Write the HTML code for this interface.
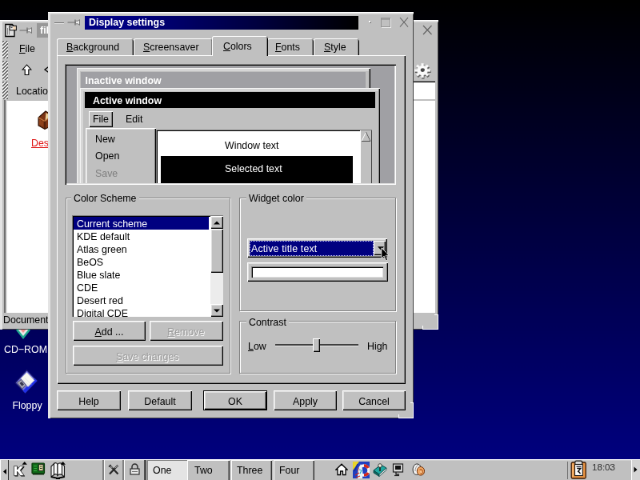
<!DOCTYPE html>
<html>
<head>
<meta charset="utf-8">
<title>Display settings</title>
<style>
html,body{margin:0;padding:0;width:640px;height:480px;overflow:hidden;background:#000040;}
body{font-family:"Liberation Sans",sans-serif;font-size:12.4px;color:#000;}
#s{position:absolute;left:0;top:0;width:800px;height:600px;will-change:transform;transform:scale(0.8);transform-origin:0 0;overflow:hidden;
 background:linear-gradient(to bottom,#000000 0px,#000084 600px);}
#s div,#s span,#s svg{position:absolute;box-sizing:border-box;}
.t{white-space:nowrap;line-height:14px;height:14px;}
u{text-decoration:underline;}
.g{background:#c0c0c0;}
/* raised button (Qt1 windows style) */
.btn{background:#c0c0c0;box-shadow:inset 1px 1px 0 #ffffff,inset -1px -1px 0 #000000,inset -2px -2px 0 #808080,inset 2px 2px 0 #dfdfdf;text-align:center;}
.btn .t{left:0;right:0;text-align:center;}
.sunk{box-shadow:inset 1px 1px 0 #808080,inset -1px -1px 0 #ffffff,inset 2px 2px 0 #000000,inset -2px -2px 0 #dfdfdf;}
.grp{border:1px solid #808080;box-shadow:inset 1px 1px 0 #ffffff,1px 1px 0 #ffffff;}
.win{background:#c0c0c0;box-shadow:inset 1px 1px 0 #ffffff,inset -1px -1px 0 #000000,inset -2px -2px 0 #808080;}
.kw{background:#c0c0c0;box-shadow:inset 0 1px 0 #ffffff,inset 0 2.500px 0 #e6e6e6,inset 3px 0 0 #e4e4e4,inset -1px -1px 0 #404040;}
.rc{background:#fff;}
.pw{background:#c0c0c0;box-shadow:inset 1px 1px 0 #f4f4f4,inset -1px -1px 0 #000000,inset -2px -2px 0 #808080,inset 4px 4px 0 #d6d6d6;}
.dis{color:#ffffff;}
.dis i{font-style:normal;position:absolute;left:-1px;top:-1px;right:1px;color:#9c9c9c;text-align:inherit;}
.tab{background:#c0c0c0;box-shadow:inset 1px 0 0 #fff,inset 0 1px 0 #fff,inset -1px 0 0 #000,inset -2px 0 0 #808080;border-radius:3px 3px 0 0;}
.pb{background:#c0c0c0;box-shadow:inset 1px 1px 0 #fff,inset -1px 0 0 #303030,inset -2px 0 0 #808080;}
</style>
</head>
<body>
<div id="s">

<!-- ================= KFM window (behind) ================= -->
<div id="kfm" class="kw" style="left:0;top:25px;width:548px;height:387px;">
 <!-- title bar -->
 <svg style="left:5px;top:4px" width="18" height="18" viewBox="0 0 18 18">
  <path d="M1.800 1.500h8.500l2.700 2.700v12.300h-11.200z" fill="#e0e0e0" stroke="#000" stroke-width="1.300"/>
  <path d="M4.500 6v8.500M6.500 9.500v5" stroke="#808080" stroke-width="1"/>
  <path d="M7 3.200h8.300v5.600h-8.300z" fill="#f0f0f0" stroke="#000" stroke-width="1.100"/>
  <path d="M11.500 4h3v4h-3z" fill="#f4d4b0"/>
  <path d="M8.500 5.500h2" stroke="#404040" stroke-width="1.200"/>
 </svg>
 <svg style="left:23.600px;top:7.500px" width="17" height="10" viewBox="0 0 17 10">
  <path d="M0.500 5h9.500" stroke="#787878" stroke-width="1.200"/>
  <path d="M10 1.500v7" stroke="#686868" stroke-width="1.200"/>
  <path d="M10.500 3.200h3l2-1.700v7l-2-1.700h-3z" fill="#ececec" stroke="#787878" stroke-width="1"/>
 </svg>
 <div style="left:46px;top:4px;width:460px;height:18px;background:#989898;"></div>
 <div class="t" style="left:50px;top:6px;color:#fff;font-weight:bold;">file:/root/</div>
 <svg style="left:528px;top:6.300px" width="13" height="13" viewBox="0 0 13 13"><path d="M1 1l10.5 11M11.5 1l-10.5 11" stroke="#606060" stroke-width="1.1" fill="none"/></svg>
 <!-- handles -->
 <svg style="left:3px;top:25.5px" width="7" height="22.5" viewBox="0 0 7 22.5"><path d="M0 0.00L7 -7.00M0 4.25L7 -2.75M0 8.50L7 1.50M0 12.75L7 5.75M0 17.00L7 10.00M0 21.25L7 14.25M0 25.50L7 18.50M0 29.75L7 22.75M0 34.00L7 27.00" stroke="#ffffff" stroke-width="1.9" fill="none"/><path d="M0 1.75L7 -5.25M0 6.00L7 -1.00M0 10.25L7 3.25M0 14.50L7 7.50M0 18.75L7 11.75M0 23.00L7 16.00M0 27.25L7 20.25M0 31.50L7 24.50M0 35.75L7 28.75" stroke="#585858" stroke-width="1.5" fill="none"/></svg>
 <svg style="left:3px;top:50.5px" width="7" height="24.5" viewBox="0 0 7 24.5"><path d="M0 0.00L7 -7.00M0 4.25L7 -2.75M0 8.50L7 1.50M0 12.75L7 5.75M0 17.00L7 10.00M0 21.25L7 14.25M0 25.50L7 18.50M0 29.75L7 22.75M0 34.00L7 27.00M0 38.25L7 31.25" stroke="#ffffff" stroke-width="1.9" fill="none"/><path d="M0 1.75L7 -5.25M0 6.00L7 -1.00M0 10.25L7 3.25M0 14.50L7 7.50M0 18.75L7 11.75M0 23.00L7 16.00M0 27.25L7 20.25M0 31.50L7 24.50M0 35.75L7 28.75M0 40.00L7 33.00" stroke="#585858" stroke-width="1.5" fill="none"/></svg>
 <svg style="left:3px;top:77px" width="7" height="22" viewBox="0 0 7 22"><path d="M0 0.00L7 -7.00M0 4.25L7 -2.75M0 8.50L7 1.50M0 12.75L7 5.75M0 17.00L7 10.00M0 21.25L7 14.25M0 25.50L7 18.50M0 29.75L7 22.75M0 34.00L7 27.00" stroke="#ffffff" stroke-width="1.9" fill="none"/><path d="M0 1.75L7 -5.25M0 6.00L7 -1.00M0 10.25L7 3.25M0 14.50L7 7.50M0 18.75L7 11.75M0 23.00L7 16.00M0 27.25L7 20.25M0 31.50L7 24.50M0 35.75L7 28.75" stroke="#585858" stroke-width="1.5" fill="none"/></svg>
 <!-- menubar -->
 <div class="t" style="left:24px;top:29px;"><u>F</u>ile</div>
 <!-- toolbar -->
 <svg style="left:26.500px;top:55px" width="13" height="15" viewBox="0 0 13 15"><path d="M6.500 1L1.200 7H4.200V13.500H8.800V7H11.800Z" fill="#fff" stroke="#000" stroke-width="1.100"/></svg>
 <svg style="left:54px;top:54px" width="14" height="16" viewBox="0 0 14 16"><path d="M10 2L2 8l8 6" fill="none" stroke="#000" stroke-width="1.3"/></svg>
 <!-- gear -->
 <svg style="left:517px;top:53px" width="24" height="24" viewBox="0 0 24 24">
  <path d="M21.7 10.1 L21.7 13.1 L18.4 13.0 L17.6 14.8 L20.0 16.8 L17.6 19.0 L15.4 16.8 L13.4 17.6 L13.5 20.5 L10.1 20.5 L10.2 17.6 L8.2 16.8 L6.0 19.0 L3.6 16.8 L6.0 14.8 L5.2 13.0 L1.9 13.1 L1.9 10.1 L5.2 10.2 L6.0 8.4 L3.6 6.4 L6.0 4.2 L8.2 6.4 L10.2 5.6 L10.1 2.7 L13.5 2.7 L13.4 5.6 L15.4 6.4 L17.6 4.2 L20.0 6.4 L17.6 8.4 L18.4 10.2Z" fill="#585858"/>
  <path d="M20.9 8.5 L20.9 11.5 L17.6 11.4 L16.8 13.2 L19.2 15.2 L16.8 17.4 L14.6 15.2 L12.6 16.0 L12.7 18.9 L9.3 18.9 L9.4 16.0 L7.4 15.2 L5.2 17.4 L2.8 15.2 L5.2 13.2 L4.4 11.4 L1.1 11.5 L1.1 8.5 L4.4 8.6 L5.2 6.8 L2.8 4.8 L5.2 2.6 L7.4 4.8 L9.4 4.0 L9.3 1.1 L12.7 1.1 L12.6 4.0 L14.6 4.8 L16.8 2.6 L19.2 4.8 L16.8 6.8 L17.6 8.6Z" fill="#fafafa" stroke="#d0d0d0" stroke-width="0.5"/>
  <ellipse cx="11.3" cy="9.6" rx="2.6" ry="2.3" fill="#484848"/>
 </svg>
 <!-- location bar -->
 <div class="t" style="left:20px;top:82px;">Location:</div>
 <div style="left:80px;top:76px;width:464px;height:23px;background:#fff;box-shadow:inset 1px 1px 0 #808080,inset 2px 2px 0 #000;"></div>
 <!-- view -->
 <div style="left:4.500px;top:100px;width:539.500px;height:266px;background:#fff;box-shadow:inset 2px 0 0 #707070,inset 3.500px 0 0 #c8c8c8,inset 0 1px 0 #c0c0c0;"></div>
 <svg style="left:46px;top:112px" width="20" height="26" viewBox="0 0 20 26">
  <path d="M2 10L11 2l8 5v13l-9 4.500-8-4.500z" fill="#7c3414" stroke="#2c1004" stroke-width="1.100"/>
  <path d="M2 10l8 4.500 9-7.500" fill="none" stroke="#c07840" stroke-width="1.300"/>
  <path d="M10 14.500v10" stroke="#2c1004" stroke-width="1"/>
  <path d="M11.500 4l6 3.500-7 6z" fill="#ecd098"/>
  <path d="M4 13v6M6.500 14.500v6" stroke="#a85828" stroke-width="1"/>
 </svg>
 <div class="t" style="left:39px;top:147px;color:#e01818;"><u>Desktop</u></div>

 <div class="rc" style="left:547px;top:368px;width:1.2px;height:19px;"></div>
 <div class="rc" style="left:528px;top:386px;width:20px;height:1.2px;"></div>
 <div class="rc" style="left:543px;top:368px;width:5px;height:1.2px;"></div>
 <div class="rc" style="left:528px;top:382px;width:1.2px;height:5px;"></div>
 <!-- status -->
 <div class="t" style="left:4px;top:368.200px;">Document: Done</div>
</div>

<!-- ================= desktop icons ================= -->
<div id="icons">
 <!-- CD-ROM (icon mostly hidden behind kfm) -->
 <svg style="left:18px;top:408px" width="22" height="20" viewBox="0 0 22 20">
  <path d="M3 4l8 10 8-10" fill="#e8e8e8" stroke="#20a890" stroke-width="2.5"/>
  <path d="M7.500 4h7l-3.500 4z" fill="#f09090"/>
 </svg>
 <div class="t" style="left:-1px;top:430px;width:66px;text-align:center;color:#fff;">CD&#8722;ROM</div>
 <!-- Floppy -->
 <svg style="left:18px;top:461px" width="30" height="32" viewBox="0 0 30 32">
  <path d="M15.500 1.500L28.500 15L13.500 30.500L1 17.500Z" fill="#7474dc" stroke="#141468" stroke-width="1.200"/>
  <path d="M28.500 15L13.500 30.500L10.500 27.500L25.500 12Z" fill="#2030e8"/>
  <path d="M15.500 4.500L25 14.500L17 22.500L8 12Z" fill="#f8f8f0" stroke="#b0b0d0" stroke-width="0.600"/>
  <path d="M11 13.500l8 8M13 11.500l8 8" stroke="#d8d8e8" stroke-width="0.700"/>
  <path d="M3.500 17.500L8.500 13.500L14.500 20.500L9.500 25Z" fill="#a8a8b8" stroke="#404058" stroke-width="0.800"/>
  <path d="M6.500 18L9 16l3 3.500-2.500 2.200Z" fill="#383850"/>
 </svg>
 <div class="t" style="left:1px;top:500px;width:66px;text-align:center;color:#fff;">Floppy</div>
</div>

<!-- ================= Display settings dialog ================= -->
<div id="dlg" class="kw" style="left:60px;top:15px;width:457px;height:508px;"></div>
<div id="dl">
 <!-- title bar -->
 <div style="left:106px;top:19.500px;width:342px;height:17.500px;background:linear-gradient(to right,#000084 0%,#000080 18%,#00003c 65%,#000000 100%);"></div>
 <div class="t" style="left:111px;top:21px;color:#fff;font-weight:bold;">Display settings</div>
 <div style="left:67.500px;top:27.500px;width:12px;height:1px;background:#707070;box-shadow:0 1px 0 #e8e8e8;"></div>
 <svg style="left:83.600px;top:22.500px" width="17" height="10" viewBox="0 0 17 10">
  <path d="M0.500 5h9.500" stroke="#787878" stroke-width="1.200"/>
  <path d="M10 1.500v7" stroke="#686868" stroke-width="1.200"/>
  <path d="M10.500 3.200h3l2-1.700v7l-2-1.700h-3z" fill="#ececec" stroke="#787878" stroke-width="1"/>
 </svg>
 <div style="left:461px;top:26px;width:2px;height:2px;background:#fff;box-shadow:1px 1px 0 #808080;"></div>
 <div style="left:476px;top:22px;width:12px;height:12px;border:1px solid #949494;box-shadow:inset 0 2px 0 #a0a0a0,1px 1px 0 #f0f0f0;"></div>
 <svg style="left:499px;top:21px" width="12" height="13" viewBox="0 0 12 13"><path d="M1 1l10 11.5M11 1l-10 11.5" stroke="#606060" stroke-width="1.1" fill="none"/></svg>

 <!-- tabs -->
 <div class="tab" style="left:71px;top:48px;width:96px;height:21px;"><div class="t" style="left:12px;top:4px;"><u>B</u>ackground</div></div>
 <div class="tab" style="left:167px;top:48px;width:99px;height:21px;"><div class="t" style="left:12px;top:4px;"><u>S</u>creensaver</div></div>
 <div class="tab" style="left:334px;top:48px;width:58px;height:21px;"><div class="t" style="left:10px;top:4px;"><u>F</u>onts</div></div>
 <div class="tab" style="left:392px;top:48px;width:57px;height:21px;"><div class="t" style="left:13px;top:4px;"><u>S</u>tyle</div></div>
 <!-- tab frame -->
 <div id="tf" style="left:71px;top:69px;width:436px;height:410.5px;background:#c0c0c0;box-shadow:inset 1px 1px 0 #fff,inset -1px -1px 0 #000,inset -2px -2px 0 #808080;"></div>

 <!-- preview -->
 <div id="pv" style="left:81px;top:80px;width:414px;height:150.5px;background:#a0a0a4;overflow:hidden;">
  <!-- coordinates inside are abs minus (81,80) -->
  <div class="pw" style="left:15px;top:5px;width:367px;height:160px;">
   <div style="left:5px;top:5px;width:356px;height:20px;background:#a0a0a4;"></div>
   <div class="t" style="left:10.600px;top:9px;color:#fff;font-weight:bold;">Inactive window</div>
  </div>
  <div class="pw" style="left:19px;top:30px;width:375px;height:160px;">
   <div style="left:6px;top:5px;width:363px;height:20px;background:#000;"></div>
   <div class="t" style="left:16px;top:8.5px;color:#fff;font-weight:bold;">Active window</div>
   <div class="btn" style="left:11px;top:29px;width:30px;height:20px;box-shadow:inset 1px 1px 0 #fff,inset -1px -1px 0 #000,inset -2px -2px 0 #808080;"><div class="t" style="top:3px;">File</div></div>
   <div class="t" style="left:57px;top:32px;">Edit</div>
   <!-- popup -->
   <div style="left:7px;top:50px;width:88px;height:120px;background:#c0c0c0;box-shadow:inset 1px 1px 0 #fff,inset -1px -1px 0 #000,inset -2px -2px 0 #808080,inset 2px 2px 0 #dfdfdf;">
    <div class="t" style="left:12px;top:7px;">New</div>
    <div class="t" style="left:12px;top:28px;">Open</div>
    <div class="t" style="left:12px;top:50px;color:#808080;">Save</div>
   </div>
   <!-- window contents -->
   <div style="left:95px;top:52px;width:270px;height:120px;background:#fff;box-shadow:inset 1px 1px 0 #808080,inset 2px 2px 0 #000;">
    <div class="t" style="left:86px;top:13px;">Window text</div>
    <div style="left:6px;top:33px;width:240px;height:40px;background:#000;"></div>
    <div class="t" style="left:86px;top:42px;color:#fff;">Selected text</div>
    <div style="left:255px;top:1px;width:15px;height:120px;background:#c0c0c0;box-shadow:inset 1px 0 0 #fff,inset -1px 0 0 #404040;"></div>
    <svg style="left:256px;top:2px" width="13" height="14" viewBox="0 0 13 14"><path d="M6.5 1L1 12.5H12Z" fill="#c0c0c0" stroke="#fff" stroke-width="1"/><path d="M6.5 1L12 12.5H1" fill="none" stroke="#505050" stroke-width="1"/></svg>
   </div>
  </div>
  <div style="left:0;top:0;width:414px;height:150.5px;box-shadow:inset 1px 1px 0 #808080,inset 2px 2px 0 #000,inset -1px -1px 0 #fff,inset -2px -2px 0 #dfdfdf;"></div>
 </div>

 <!-- Color Scheme group -->
 <div class="grp" style="left:82px;top:247px;width:206px;height:219.800px;"></div>
 <div class="t g" style="left:89px;top:241px;padding:0 3px;">Color Scheme</div>
 <!-- listbox -->
 <div id="lb" style="left:90px;top:269px;width:188.5px;height:126.5px;background:#fff;overflow:hidden;">
  <div style="left:2px;top:2px;width:169px;height:16px;background:#000080;"></div>
  <div class="t" style="left:6px;top:4px;color:#fff;">Current scheme</div>
  <div class="t" style="left:6px;top:20px;">KDE default</div>
  <div class="t" style="left:6px;top:36px;">Atlas green</div>
  <div class="t" style="left:6px;top:52px;">BeOS</div>
  <div class="t" style="left:6px;top:68px;">Blue slate</div>
  <div class="t" style="left:6px;top:84px;">CDE</div>
  <div class="t" style="left:6px;top:100px;">Desert red</div>
  <div class="t" style="left:6px;top:116px;">Digital CDE</div>
  <div class="sunk" style="left:0;top:0;width:192px;height:130px;"></div>
  <!-- scrollbar -->
  <div style="left:172.5px;top:1px;width:16px;height:126px;background:#ececec;"></div>
  <div class="btn" style="left:172.5px;top:1px;width:16px;height:16px;"></div>
  <svg style="left:176.5px;top:7px" width="8" height="5" viewBox="0 0 8 5"><path d="M0 4.5L4 0.5L8 4.5Z" fill="#000"/></svg>
  <div class="btn" style="left:172.5px;top:17px;width:16px;height:54.5px;"></div>
  <div class="btn" style="left:172.5px;top:110.5px;width:16px;height:16px;"></div>
  <svg style="left:176.5px;top:116.5px" width="8" height="5" viewBox="0 0 8 5"><path d="M0 0.5L4 4.5L8 0.5Z" fill="#000"/></svg>
 </div>
 <div class="btn" style="left:91px;top:401px;width:91px;height:25px;"><div class="t" style="top:7px;"><u>A</u>dd ...</div></div>
 <div class="btn" style="left:187px;top:401px;width:91.500px;height:25px;"><div class="t dis" style="top:8px;left:1px;"><u>R</u>emove<i><u>R</u>emove</i></div></div>
 <div class="btn" style="left:91px;top:432px;width:187.500px;height:25px;"><div class="t dis" style="top:7.5px;left:1px;"><u>S</u>ave changes<i><u>S</u>ave changes</i></div></div>

 <!-- Widget color group -->
 <div class="grp" style="left:299px;top:247px;width:196px;height:141.5px;"></div>
 <div class="t g" style="left:308px;top:241px;padding:0 3px;">Widget color</div>
 <!-- combo -->
 <div class="btn" style="left:309px;top:298px;width:175px;height:24px;">
  <div style="left:3px;top:2.500px;width:154.500px;height:19px;background:#000080;outline:1px dotted #d0d0ff;outline-offset:-1px;"></div>
  <div class="t" style="left:5px;top:6px;color:#fff;text-align:left;letter-spacing:0.150px;">Active title text</div>
  <div class="btn" style="left:158px;top:3px;width:15px;height:18px;box-shadow:inset 1px 1px 0 #fff,inset -1px -1px 0 #000,inset -2px -2px 0 #808080;"></div>
  <svg style="left:162.500px;top:9.500px" width="8" height="5" viewBox="0 0 8 5"><path d="M0 0.300H8L4 4.500Z" fill="#000"/></svg>
 </div>
 <!-- colour button -->
 <div class="btn" style="left:309px;top:327.500px;width:176px;height:24px;">
  <div style="left:4.500px;top:5px;width:165px;height:14.500px;background:#fff;box-shadow:inset 1px 1px 0 #808080,inset 2px 2px 0 #000,inset -1px -1px 0 #dfdfdf;"></div>
 </div>

 <!-- Contrast group -->
 <div class="grp" style="left:299px;top:401px;width:196px;height:65.800px;"></div>
 <div class="t g" style="left:308px;top:396px;padding:0 3px;">Contrast</div>
 <div class="t" style="left:310px;top:426px;"><u>L</u>ow</div>
 <div style="left:344px;top:429.500px;width:104px;height:2.600px;background:#404040;box-shadow:0 1px 0 #e8e8e8;"></div>
 <div class="btn" style="left:391px;top:423px;width:9px;height:17px;box-shadow:inset 1px 1px 0 #fff,inset -1px -1px 0 #000,inset -2px -2px 0 #808080;"></div>
 <div class="t" style="left:459px;top:426px;">High</div>

 <!-- bottom buttons -->
 <div class="btn" style="left:71px;top:488px;width:80px;height:25px;"><div class="t" style="top:6.5px;">Help</div></div>
 <div class="btn" style="left:160px;top:488px;width:80px;height:25px;"><div class="t" style="top:6.5px;">Default</div></div>
 <div style="left:254px;top:488px;width:80px;height:25px;background:#000;"></div>
 <div class="btn" style="left:255px;top:489px;width:78px;height:23px;"><div class="t" style="top:5.5px;">OK</div></div>
 <div class="btn" style="left:342px;top:488px;width:79px;height:25px;"><div class="t" style="top:6.5px;">Apply</div></div>
 <div class="btn" style="left:428px;top:488px;width:79px;height:25px;"><div class="t" style="top:6.5px;">Cancel</div></div>


 <!-- resize corner marks -->
 <div class="rc" style="left:516px;top:503px;width:1.2px;height:20px;"></div>
 <div class="rc" style="left:498px;top:522px;width:19px;height:1.2px;"></div>
 <div class="rc" style="left:513px;top:503px;width:4px;height:1.2px;"></div>
 <div class="rc" style="left:498px;top:518px;width:1.2px;height:5px;"></div>
 <!-- mouse cursor -->
 <svg style="left:476px;top:308.500px" width="11.500" height="18" viewBox="0 0 14 22"><path d="M1 1V17L5 13.5L8 20.5L10.5 19.5L7.5 12.5H12.5Z" fill="#000" stroke="#fff" stroke-width="0.9"/></svg>
 <div class="tab" style="left:265px;top:45px;width:70px;height:25px;background:#c0c0c0;"><div class="t" style="left:14px;top:6px;"><u>C</u>olors</div></div>
</div>

<!-- ================= panel ================= -->
<div id="panel" class="g" style="left:0;top:573.800px;width:800px;height:27px;box-shadow:inset 0 1.200px 0 #fff;">
 <!-- left hide button -->
 <div style="left:0;top:0;width:11px;height:27px;background:#c8c8c8;box-shadow:inset 1px 1px 0 #fff,inset -1px 0 0 #303030;"></div>
 <svg style="left:3.5px;top:12.1px" width="4" height="7" viewBox="0 0 4 7"><path d="M4 0V7L0 3.5Z" fill="#000"/></svg>
 <!-- K -->
 <svg style="left:14px;top:1.1px" width="24" height="22" viewBox="0 0 24 22">
  <path d="M3.5 7.5h4v4.5l3.7-4.5h4.6l-4.6 5.3 5 6.7h-4.8l-3.9-5.2v5.2h-4z" fill="#000" transform="translate(1,1)"/>
  <path d="M3.5 7.5h4v4.5l3.7-4.5h4.6l-4.6 5.3 5 6.7h-4.8l-3.9-5.2v5.2h-4z" fill="#fff" stroke="#303030" stroke-width="0.8"/>
  <path d="M13.5 5.8l3.2-3.8 3.2 3.8z" fill="#000"/>
 </svg>
 <!-- green card -->
 <svg style="left:39px;top:4.1px" width="18" height="17" viewBox="0 0 18 17">
  <rect x="1" y="1" width="15.5" height="13" rx="1" fill="#106818" stroke="#083808" stroke-width="1.2"/>
  <rect x="9.5" y="2.5" width="5.5" height="8" fill="#d8d4a0" stroke="#202020" stroke-width="0.8"/>
  <path d="M11 5h2.5M11 7.5h2.5" stroke="#303020" stroke-width="1.2"/>
  <path d="M3 4.5h4M3.5 7.5h3.5M3 10.5h4" stroke="#38b040" stroke-width="1.2"/>
  <rect x="2" y="13.5" width="14" height="2" fill="#103010"/>
 </svg>
 <!-- books -->
 <svg style="left:62px;top:2.1px" width="22" height="23" viewBox="0 0 22 23">
  <path d="M2 7l3.5-3.5v14L2 20z" fill="#f4f4f4" stroke="#181818" stroke-width="1.1"/>
  <path d="M5.5 3.5c2-1.5 3.5-1 4.5 1v14c-1-2-2.500-2.500-4.500-1z" fill="#fff" stroke="#181818" stroke-width="1.1"/>
  <path d="M10 4.500c1.500-2 3.500-2 5.500-1v14c-2-1-4-1-5.500 1z" fill="#fff" stroke="#181818" stroke-width="1.1"/>
  <path d="M15.500 3.500l3 3V20l-3-2.500z" fill="#e8e8e8" stroke="#181818" stroke-width="1.1"/>
  <path d="M2 20l8 1.800 8.500-1.800" fill="none" stroke="#000" stroke-width="1.8"/>
  <path d="M8 22.500h5" stroke="#000" stroke-width="1"/>
  <path d="M13.500 4.800l3.200-3.800 3.200 3.800z" fill="#000"/>
 </svg>
 <!-- separators -->
 <div style="left:128px;top:1px;width:2px;height:26px;background:#808080;box-shadow:1px 0 0 #fff;"></div>
 <svg style="left:135px;top:6.1px" width="15" height="14" viewBox="0 0 15 14">
  <path d="M2 1.500l10.500 11M12.500 1.500l-10.500 11" stroke="#282828" stroke-width="2.200" fill="none"/>
  <path d="M1.500 1l4 4.200M13 1l-4 4.200" stroke="#d8d8d8" stroke-width="0.900" fill="none"/>
  <path d="M1 3.500l2.500-2.500" stroke="#282828" stroke-width="1.500"/>
 </svg>
 <div style="left:153px;top:1px;width:2px;height:26px;background:#808080;box-shadow:1px 0 0 #fff;"></div>
 <svg style="left:161px;top:5.1px" width="15" height="15" viewBox="0 0 15 15">
  <path d="M4 7V4.5a3.5 3.5 0 0 1 7 0V7" fill="none" stroke="#303030" stroke-width="1.5"/>
  <rect x="2" y="7" width="11" height="7" fill="#e8e8e8" stroke="#303030" stroke-width="1.2"/>
  <path d="M4 10.5h7" stroke="#707070" stroke-width="1"/>
 </svg>
 <div style="left:180px;top:1px;width:3px;height:26px;background:#505050;"></div>
 <!-- desktop buttons -->
 <div style="left:184px;top:1px;width:50px;height:26px;background:#e4e4e4;box-shadow:inset 1px 1px 0 #808080;"><div class="t" style="left:7px;top:6.400px;">One</div></div>
 <div class="pb" style="left:234px;top:1px;width:53px;height:26px;"><div class="t" style="left:9px;top:6.400px;">Two</div></div>
 <div class="pb" style="left:289px;top:1px;width:51px;height:26px;"><div class="t" style="left:7px;top:6.400px;">Three</div></div>
 <div class="pb" style="left:342px;top:1px;width:51px;height:26px;"><div class="t" style="left:7px;top:6.400px;">Four</div></div>
 <!-- home -->
 <svg style="left:419px;top:5.1px" width="16" height="16" viewBox="0 0 16 16">
  <path d="M1 8L8 1.2L15 8H13V14.5H9.5V10H6.5V14.5H3V8Z" fill="#fff" stroke="#000" stroke-width="1.3"/>
 </svg>
 <!-- kcontrol-ish colourful icon -->
 <svg style="left:441px;top:3.1px" width="21" height="21" viewBox="0 0 21 21">
  <rect x="0" y="0" width="21" height="21" fill="#2040c0"/>
  <path d="M0 0h8l-8 11z" fill="#e8d428"/>
  <path d="M2 12l4-9" stroke="#1828a0" stroke-width="1.4"/>
  <circle cx="14" cy="11" r="6" fill="none" stroke="#f4f4f4" stroke-width="3.4"/>
  <path d="M14 5a6 6 0 0 1 5.200 3" fill="none" stroke="#d82818" stroke-width="3.4"/>
  <path d="M19.200 14a6 6 0 0 1-5.200 3" fill="none" stroke="#d82818" stroke-width="3.4"/>
  <path d="M8.800 14a6 6 0 0 1 0-6" fill="none" stroke="#d82818" stroke-width="3.4"/>
  <path d="M6 21c0-7 1-13 4-18 2 4 3 10 2 18z" fill="#e8f4f8"/>
  <path d="M8 10l3 1-2 4" fill="none" stroke="#30a8c0" stroke-width="1.200"/>
  <path d="M3 17l5-3M4 20l5-2" stroke="#d82818" stroke-width="1.200"/>
 </svg>
 <!-- teal book -->
 <svg style="left:466px;top:4.1px" width="18" height="18" viewBox="0 0 18 18">
  <path d="M1 10L10 3l7 4-9 8z" fill="#20a8a0" stroke="#084848" stroke-width="1"/>
  <path d="M1 10v3l7 4.5V15z" fill="#106860" stroke="#084848" stroke-width="0.8"/>
  <path d="M8 15l9-8v2.5L8 17.5z" fill="#e8e8e8" stroke="#084848" stroke-width="0.8"/>
  <path d="M9 6v5" stroke="#202020" stroke-width="1.600"/>
  <circle cx="9" cy="4" r="2.300" fill="#f0f0e0" stroke="#202020" stroke-width="0.800"/>
 </svg>
 <!-- monitor -->
 <svg style="left:490px;top:5.1px" width="16" height="17" viewBox="0 0 16 17">
  <rect x="1.5" y="1" width="12" height="10" fill="#d8d8d8" stroke="#202020" stroke-width="1.2"/>
  <rect x="4" y="3" width="7" height="5" fill="#101010"/>
  <path d="M5 11v3h4" fill="none" stroke="#202020" stroke-width="1.3"/>
  <path d="M3 15.5h6" stroke="#202020" stroke-width="1.2"/>
 </svg>
 <!-- shell -->
 <svg style="left:514px;top:4.1px" width="18" height="18" viewBox="0 0 18 18">
  <path d="M2.500 12C1 6 4 1.500 8 2c3 0.500 4 3 4 5l-3 8c-3 1-5.500 0-6.500-3z" fill="#f0f0f0" stroke="#303030" stroke-width="1"/>
  <path d="M5 11c0-4 1.500-6.500 4-8M7.500 13c0-3 1-5.500 3-7" fill="none" stroke="#909090" stroke-width="0.900"/>
  <path d="M9 6.500c3-2.500 8 0 7.500 5-0.500 4-4 5.500-7 4-2.500-1.500-3-6.500-0.500-9z" fill="#f0a868" stroke="#703008" stroke-width="1"/>
  <path d="M10.500 9c2-1 4 0.500 4 2.500s-1.500 3-3 2.500" fill="none" stroke="#a04810" stroke-width="1"/>
  <path d="M11 12c1-0.500 2 0 2 1" fill="none" stroke="#f8e0c0" stroke-width="1"/>
 </svg>
 <!-- clock area -->
 <div style="left:709px;top:3px;width:1.200px;height:22px;background:#707070;"></div>
 <svg style="left:713px;top:1.6px" width="21" height="24" viewBox="0 0 21 24">
  <rect x="1.200" y="3" width="18" height="20" rx="1.500" fill="#e89444" stroke="#3c1c04" stroke-width="1.300"/>
  <path d="M3 4.500V21" stroke="#f8c080" stroke-width="1.200"/>
  <path d="M5.800 5V2.800Q5.800 1.200 7.500 1.200H13Q14.700 1.200 14.700 2.800V5" fill="#d8d8d8" stroke="#181818" stroke-width="1.200"/>
  <rect x="5.500" y="5.500" width="9.800" height="14" fill="#fcfcfc" stroke="#181818" stroke-width="1.100"/>
  <path d="M7.500 8.200h6" stroke="#202030" stroke-width="1.300"/>
  <path d="M8.200 10.500h4.500l-3.500 4.500M9.500 13.500l3 3.500" stroke="#101010" stroke-width="1.500" fill="none"/>
 </svg>
 <div class="t" style="left:740px;top:3.400px;font-size:11.6px;color:#303030;">18:03</div>
 <!-- right hide button -->
 <div style="left:789px;top:0;width:11px;height:27px;background:#d4d4d4;box-shadow:inset 1px 1px 0 #fff;"></div>
 <svg style="left:792px;top:9.6px" width="5" height="8" viewBox="0 0 5 8"><path d="M0.5 0.5V7.5L4.5 4Z" fill="#000"/></svg>
</div>

</div>
</body>
</html>
